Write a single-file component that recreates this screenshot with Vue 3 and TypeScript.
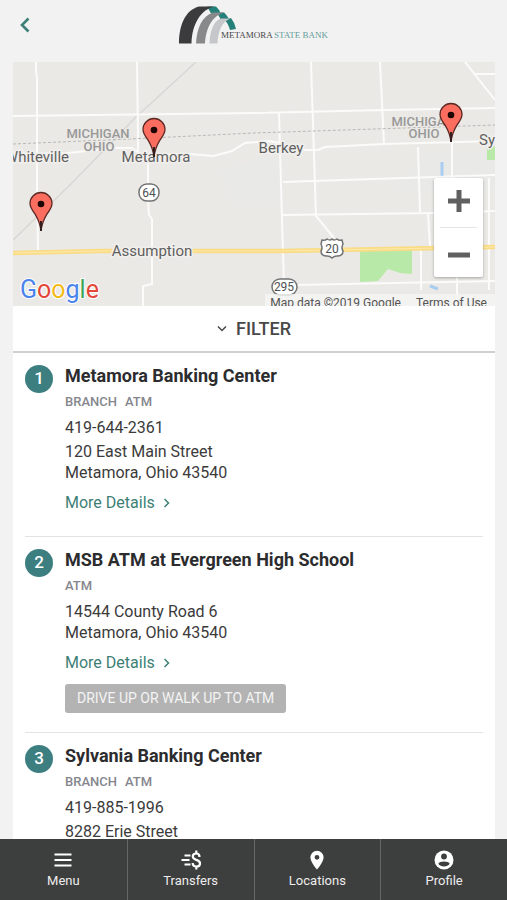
<script setup lang="ts">
import { ref } from 'vue'

interface Place {
  id: number
  name: string
  tags: string[]
  phone?: string
  address: string[]
  note?: string
}

const places: Place[] = [
  {
    id: 1,
    name: 'Metamora Banking Center',
    tags: ['BRANCH', 'ATM'],
    phone: '419-644-2361',
    address: ['120 East Main Street', 'Metamora, Ohio 43540'],
  },
  {
    id: 2,
    name: 'MSB ATM at Evergreen High School',
    tags: ['ATM'],
    address: ['14544 County Road 6', 'Metamora, Ohio 43540'],
    note: 'DRIVE UP OR WALK UP TO ATM',
  },
  {
    id: 3,
    name: 'Sylvania Banking Center',
    tags: ['BRANCH', 'ATM'],
    phone: '419-885-1996',
    address: ['8282 Erie Street'],
  },
]

const pins = [
  { x: 154, y: 130 },
  { x: 41, y: 204 },
  { x: 451, y: 115 },
]

const filterOpen = ref(false)
</script>

<template>
  <div class="app">
    <header class="header">
      <button class="back" type="button" aria-label="Back">
        <svg width="10" height="16" viewBox="0 0 10 16">
          <path d="M8.5 1.500 2 8l6.500 6.500" fill="none" stroke="#3c8077" stroke-width="2.600" />
        </svg>
      </button>
      <svg class="logo" width="153" height="40" viewBox="178 5 153 40" role="img" aria-label="Metamora State Bank">
        <path d="M208 6.500H217Q220 9 222 14L213 15Z" fill="#248078" />
        <path d="M218 12.500H225Q228 15 230 19L222 20Z" fill="#248078" />
        <path d="M225 19 232 18Q236 23 237 29L231 30Q229 23 225 19Z" fill="#248078" />
        <path d="M180 43.500C180 26 186 10 200 6.500H216C202 9 193 24 192.500 43.500Z" fill="#3b3b3d" />
        <path d="M197 43.500C198 28 203 16 214 12.500H226C214 15 207 27 206 43.500Z" fill="#88898b" />
        <path d="M210.500 43.500C211 32 214 21 222 18.500H232C223 21 219 31 218.500 43.500Z" fill="#c6c7cb" />
        <text x="222" y="38" class="logo-text" fill="#47474a">METAMORA</text>
        <text x="275" y="38" class="logo-text" fill="#649c99">STATE BANK</text>
      </svg>
    </header>

    <main class="content">
      <section class="map" aria-label="Map">
        <svg class="map-art" viewBox="13 62 482 244" preserveAspectRatio="xMidYMid slice">
          <rect x="13" y="62" width="482" height="244" fill="#ebe9e6" />
          <path d="M395 185 430 152H495V190H395ZM220 172 283 150V205H235Z" fill="#e9e9e8" />
          <path d="M360 250 412 249V274L400 273 388 269 378 281 360 282Z" fill="#b9e9a8" />
          <path d="M487 149 495 146V160H487Z" fill="#b9e9a8" />
          <path d="M442 162V176M430 286 438 289" stroke="#a8cdf0" stroke-width="3" />
          <path d="M196 62 135 118 70 185 13 240" fill="none" stroke="#d9d7d5" stroke-width="1.500" />
          <g class="roads">
            <path d="M36 62V72L37 77V185L38 250" />
            <path d="M137 62 138 139V155" />
            <path d="M13 116 254 113 385 110 495 108" />
            <path d="M13 154 68 153 115 148 132 148 142 155 190 154 213 156 232 151 245 143 270 141 305 150 318 150 325 147 385 144 495 141" />
            <path d="M146 150 148 160V200L149 215 152 219V284L143 286V306" />
            <path d="M311 62 315 185 316 216 334 238" />
            <path d="M380 62 384 144" />
            <path d="M279 113 281 185 284 285V306" />
            <path d="M465 62 495 100M475 74H495" />
            <path d="M418 147 420 212M428 213 430 247M421 250V290M452 141V240M489 178V290M457 270V306" />
            <path d="M283 182 495 175M283 215 435 213 495 211M295 285 495 281" />
          </g>
          <path d="M13 144 130 139 254 133 495 125" fill="none" stroke="#b9b8b8" stroke-width="1" stroke-dasharray="3 2" />
          <path d="M13 253 100 251 280 251 495 247" fill="none" stroke="#f9dc84" stroke-width="4.500" />
          <path d="M13 253 100 251 280 251 495 247" fill="none" stroke="#fce9ae" stroke-width="1" />

          <g class="state" text-anchor="middle">
            <text x="98" y="138">MICHIGAN</text>
            <text x="99" y="151">OHIO</text>
            <text x="423" y="126">MICHIGAN</text>
            <text x="424" y="138">OHIO</text>
          </g>
          <g class="town">
            <text x="69" y="162" text-anchor="end">Whiteville</text>
            <text x="156" y="162" text-anchor="middle">Metamora</text>
            <text x="281" y="153" text-anchor="middle">Berkey</text>
            <text x="152" y="256" text-anchor="middle">Assumption</text>
            <text x="479" y="145">Sylvania</text>
          </g>
          <g class="shield">
            <rect x="139" y="184" width="20" height="17" rx="8" />
            <path d="M322 240Q325 241 327 239Q330 241 332 239Q334 241 337 239Q339 241 342 240L343 244Q341 248 343 251Q343 256 337 256Q334 256 332 258Q330 256 327 256Q321 256 321 251Q323 248 321 244Z" />
            <rect x="272" y="279" width="25" height="16" rx="8" />
            <text x="149" y="197">64</text>
            <text x="332" y="253">20</text>
            <text x="284" y="291">295</text>
          </g>
          <g v-for="pin in pins" :key="pin.x" :transform="`translate(${pin.x} ${pin.y})`">
            <path
              d="M0 27C-1 18-3 15-6 10C-9 6-11 3-11-.5A11 11 0 0 1 11-.5C11 3 9 6 6 10C3 15 1 18 0 27Z"
              fill="#fb6d5f" stroke="#5c2823" stroke-width="1.300"
            />
            <path d="M0 17V27" stroke="#33201e" stroke-width="2" />
            <circle r="3.300" fill="#1c0503" />
          </g>
          <text x="20" y="298" class="google">
            <tspan fill="#4a83ec">G</tspan><tspan fill="#e2473a">o</tspan><tspan fill="#f3ba17">o</tspan><tspan fill="#4a83ec">g</tspan><tspan fill="#3ba757">l</tspan><tspan fill="#e2473a">e</tspan>
          </text>
        </svg>
        <div class="credits">
          <span>Map data ©2019 Google</span>
          <a href="#terms">Terms of Use</a>
        </div>
        <div class="zoom">
          <button type="button" aria-label="Zoom in">
            <svg width="22" height="22" viewBox="0 0 22 22"><path d="M0 11H22M11 0V22" stroke="#606060" stroke-width="5" /></svg>
          </button>
          <button type="button" aria-label="Zoom out">
            <svg width="22" height="22" viewBox="0 0 22 22"><path d="M0 11H22" stroke="#606060" stroke-width="5" /></svg>
          </button>
        </div>
      </section>

      <button class="filter" type="button" :aria-expanded="filterOpen" @click="filterOpen = !filterOpen">
        <svg width="10" height="8" viewBox="0 0 10 8"><path d="M1 1.500 5 5.500 9 1.500" fill="none" stroke="#484848" stroke-width="1.500" /></svg>
        <span>FILTER</span>
      </button>

      <ol class="places">
        <li v-for="place in places" :key="place.id" class="place">
          <span class="badge">{{ place.id }}</span>
          <div class="details">
            <h2>{{ place.name }}</h2>
            <p class="tags"><span v-for="tag in place.tags" :key="tag">{{ tag }}</span></p>
            <p v-if="place.phone" class="phone">{{ place.phone }}</p>
            <p class="address"><span v-for="line in place.address" :key="line">{{ line }}</span></p>
            <a class="more" :href="`#place-${place.id}`">
              More Details
              <svg width="7" height="10" viewBox="0 0 7 10"><path d="M1.500 1 5.500 5 1.500 9" fill="none" stroke="#3d7f76" stroke-width="1.500" /></svg>
            </a>
            <button v-if="place.note" class="note" type="button">{{ place.note }}</button>
          </div>
        </li>
      </ol>
    </main>

    <nav class="tabs">
      <a href="#menu">
        <svg width="22" height="20" viewBox="0 0 22 20"><path d="M2.500 4.500H19.500M2.500 10H19.500M2.500 15.500H19.500" stroke="#fff" stroke-width="2.200" /></svg>
        <span>Menu</span>
      </a>
      <a href="#transfers">
        <svg width="22" height="20" viewBox="0 0 22 20" fill="none" stroke="#fff">
          <path d="M4.500 5.500H10.500M1.500 10H9.500M4.500 14.500H10.500" stroke-width="2" />
          <path d="M19.500 7C19.500 4.500 18 3.500 16.300 3.500C14.300 3.500 12.800 4.700 12.800 6.500C12.800 8.500 14.300 9.200 16.300 9.900C18.500 10.600 20 11.400 20 13.400C20 15.300 18.500 16.500 16.400 16.500C14.100 16.500 12.700 15.200 12.700 13M16.300 .5V4M16.300 16V19.500" stroke-width="2.200" />
        </svg>
        <span>Transfers</span>
      </a>
      <a href="#locations">
        <svg width="22" height="20" viewBox="0 0 22 20"><path fill="#fff" fill-rule="evenodd" d="M11 .7A6.600 6.600 0 0 0 4.400 7.300C4.400 12.200 11 19.500 11 19.500S17.600 12.200 17.600 7.300A6.600 6.600 0 0 0 11 .7ZM11 4.900A2.400 2.400 0 1 1 11 9.700A2.400 2.400 0 0 1 11 4.900Z" /></svg>
        <span>Locations</span>
      </a>
      <a href="#profile">
        <svg width="22" height="20" viewBox="0 0 22 20">
          <circle cx="11" cy="10" r="9.500" fill="#fff" />
          <circle cx="11" cy="6.500" r="2.900" fill="#3d3e3e" />
          <path d="M5.300 13.700C6.400 10.900 15.600 10.900 16.700 13.700C14.400 17.400 7.600 17.400 5.300 13.700Z" fill="#3d3e3e" />
        </svg>
        <span>Profile</span>
      </a>
    </nav>
  </div>
</template>

<style>
body {
  margin: 0;
  background: #f2f2f2;
}
</style>

<style scoped>
.app {
  display: flex;
  flex-direction: column;
  height: 100vh;
  background: #f2f2f2;
  color: #3b3b3b;
  font-family: Roboto, "Liberation Sans", sans-serif;
}

button {
  padding: 0;
  border: 0;
  background: none;
  color: inherit;
  font: inherit;
  cursor: pointer;
}

a {
  color: inherit;
  text-decoration: none;
}

svg {
  display: block;
}

h2,
p,
ol {
  margin: 0;
  padding: 0;
}

.header {
  display: grid;
  grid-template-columns: 40px 1fr 40px;
  flex: none;
  align-items: start;
  height: 57px;
  padding-top: 5px;
}

.back {
  display: flex;
  align-items: center;
  justify-content: flex-end;
  height: 40px;
  padding-right: 10px;
}

.logo {
  justify-self: center;
}

.logo-text {
  font: 9px "Liberation Serif", serif;
}

.content {
  flex: 1;
  min-height: 0;
  margin: 0 12px 0 13px;
  overflow-y: auto;
  scrollbar-width: none;
  background: #fff;
}

.map {
  position: relative;
  height: 244px;
  overflow: hidden;
}

.map-art {
  width: 100%;
  height: 100%;
}

.roads {
  fill: none;
  stroke: #fbfbfa;
  stroke-width: 2;
}

.state {
  fill: #989898;
  font-size: 13px;
  font-weight: 500;
  stroke: #ebe9e6;
  stroke-width: 2;
  paint-order: stroke;
}

.town {
  fill: #5f5f60;
  font-size: 15px;
  stroke: #f1efed;
  stroke-width: 3;
  paint-order: stroke;
}

.shield rect,
.shield path {
  fill: #fff;
  stroke: #727475;
  stroke-width: 1.5;
}

.shield text {
  fill: #4e5052;
  font-size: 12px;
  text-anchor: middle;
}

.google {
  font-size: 25px;
  font-weight: 400;
  stroke: #fff;
  stroke-width: 2;
  paint-order: stroke;
}

.credits {
  position: absolute;
  right: 0;
  bottom: -6px;
  display: flex;
  gap: 15px;
  padding: 0 8px 0 5px;
  background: rgba(245, 245, 244, 0.8);
  color: #555;
  font-size: 12px;
  line-height: 18px;
  white-space: nowrap;
}

.zoom {
  position: absolute;
  right: 12px;
  bottom: 29px;
  display: flex;
  flex-direction: column;
  width: 49px;
  padding: 0 6px;
  box-sizing: border-box;
  border-radius: 2px;
  background: #fff;
  box-shadow: 0 1px 3px rgba(0, 0, 0, 0.3);
}

.zoom button {
  display: flex;
  align-items: center;
  justify-content: center;
  height: 49px;
  padding-bottom: 4px;
}

.zoom button + button {
  height: 50px;
  padding: 4px 0 0;
  border-top: 1px solid #e4e4e4;
}

.filter {
  display: flex;
  align-items: center;
  justify-content: center;
  gap: 9px;
  width: 100%;
  height: 47px;
  border-bottom: 2px solid #d0d0d0;
  color: #484848;
  font-size: 18px;
  font-weight: 500;
}

.places {
  padding: 0 12px;
  list-style: none;
}

.place {
  display: flex;
  gap: 12px;
  padding: 12px 0 19px;
}

.place + .place {
  border-top: 1px solid #e3e3e3;
}

.badge {
  flex: none;
  width: 28px;
  height: 28px;
  border-radius: 50%;
  background: #3d7f80;
  color: #fff;
  font-size: 17px;
  font-weight: 500;
  line-height: 27px;
  text-align: center;
}

.details {
  display: flex;
  flex-direction: column;
  align-items: flex-start;
  font-size: 16px;
  line-height: 21px;
}

h2 {
  color: #2c2c2e;
  font-size: 18px;
  font-weight: 700;
  line-height: 22px;
}

.tags {
  display: flex;
  gap: 8px;
  margin: 6px 0;
  color: #85868d;
  font-size: 13px;
  font-weight: 500;
  line-height: 18px;
}

.phone {
  margin-bottom: 3px;
}

.address span {
  display: block;
}

.more {
  display: flex;
  align-items: center;
  gap: 8px;
  margin: 9px 0 4px;
  color: #3d7f76;
}

.note {
  height: 29px;
  margin-top: 7px;
  padding: 0 12px;
  border-radius: 3px;
  background: #b3b3b3;
  color: #f4f4f4;
  font-size: 14px;
}

.tabs {
  display: grid;
  grid-template-columns: repeat(4, 1fr);
  flex: none;
  height: 61px;
  background: #3d3e3e;
  color: #ededed;
  font-size: 13px;
  line-height: 18px;
}

.tabs a {
  display: flex;
  flex-direction: column;
  align-items: center;
  gap: 2px;
  padding-top: 11px;
}

.tabs a + a {
  border-left: 1px solid #666767;
}
</style>
